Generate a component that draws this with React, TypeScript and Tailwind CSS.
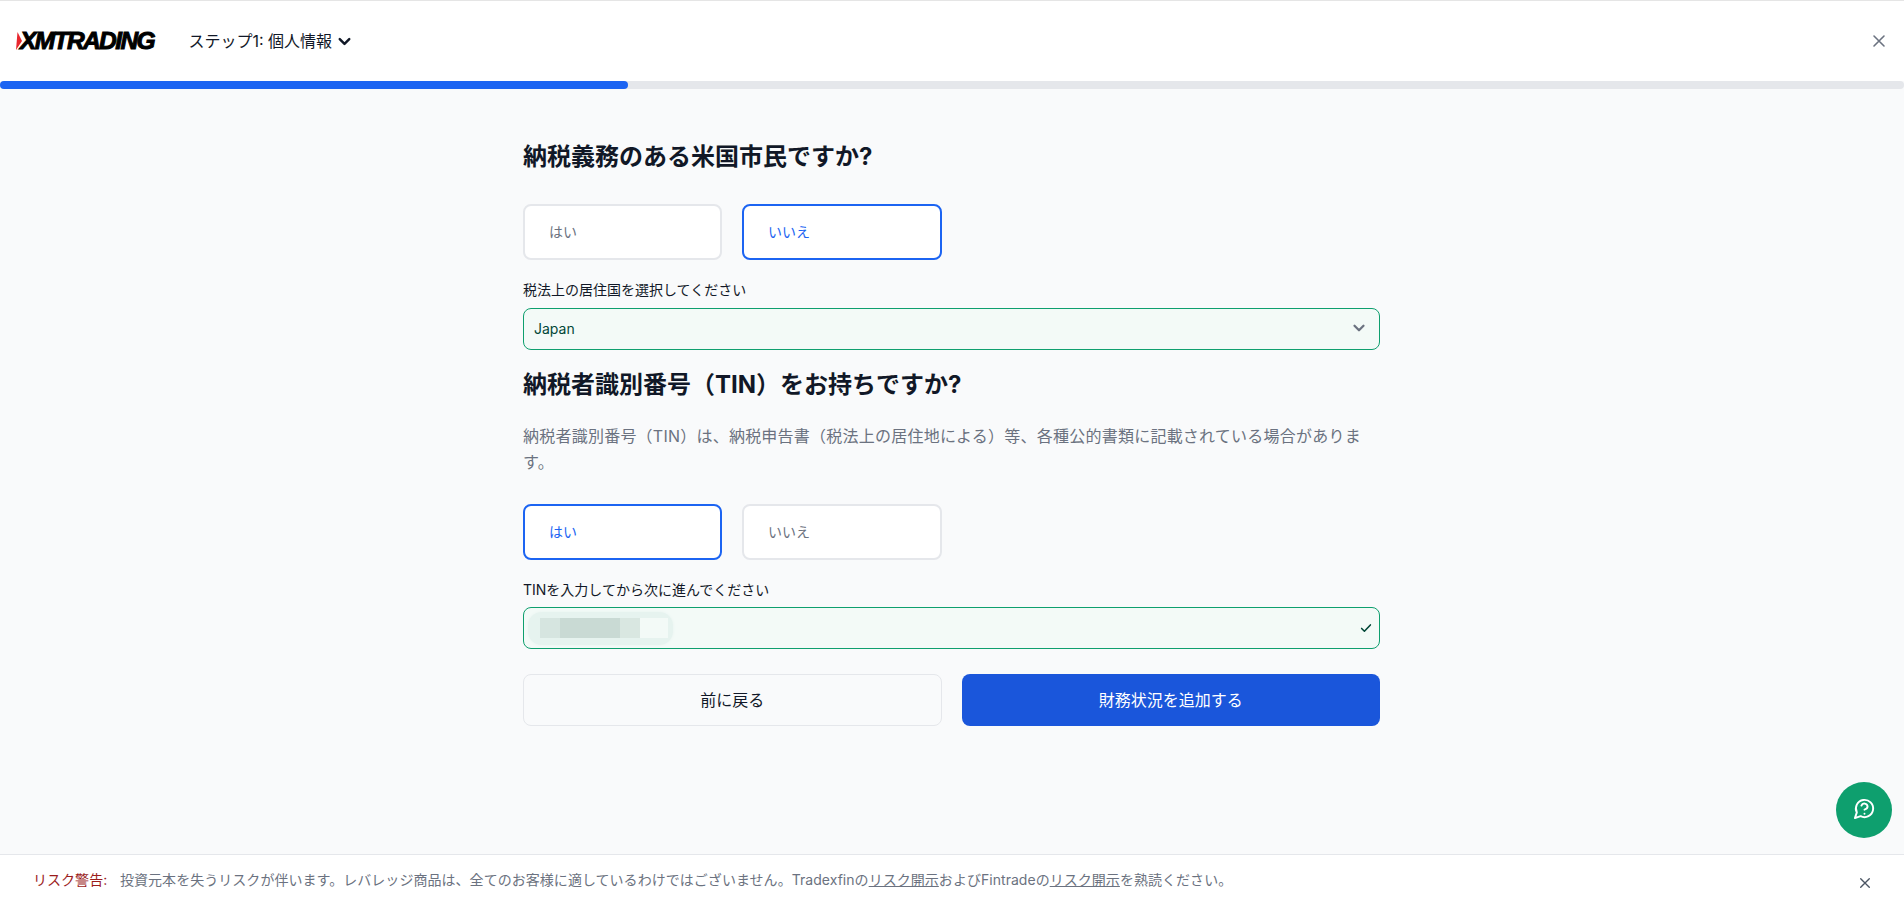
import React from "react";

const Chevron = ({ className, width = 2 }: { className: string; width?: number }) => (
  <svg viewBox="0 0 20 20" fill="none" stroke="currentColor" strokeWidth={width} strokeLinecap="round" strokeLinejoin="round" className={className}>
    <path d="M5 7.5l5 5 5-5" />
  </svg>
);

const Close = ({ className }: { className: string }) => (
  <svg viewBox="0 0 14 14" fill="none" stroke="currentColor" strokeWidth="1.6" strokeLinecap="round" className={className}>
    <path d="M2 2l10 10M12 2L2 12" />
  </svg>
);

const Choice = ({ label, active }: { label: string; active?: boolean }) => (
  <button
    className={
      "h-[56px] rounded-lg border-2 bg-white pb-[2px] pl-[24px] text-left text-[14px] " +
      (active ? "border-[#1c64f2] text-[#1c64f2]" : "border-[#e5e7eb] text-[#6b7280]")
    }
  >
    {label}
  </button>
);

export default function App() {
  return (
    <div className="relative flex h-screen flex-col overflow-hidden bg-[#f9fafb] font-['Inter','Noto_Sans_CJK_JP',sans-serif] text-[#111827]">
      <header className="flex h-[81px] shrink-0 items-center border-t border-[#e5e5e5] bg-white pl-[16px] pr-[18px]">
        <div className="flex w-[172.5px] items-center">
          <svg viewBox="0 0 6 18" className="mr-[-2px] h-[18px] w-[6px] shrink-0">
            <polygon points="1.5,0 6,9 0,18" fill="#e8262d" />
          </svg>
          <span className="font-['Liberation_Sans',sans-serif] text-[24.5px] font-bold italic leading-none tracking-[-1.6px] text-black [-webkit-text-stroke:1px_black]">
            XMTRADING
          </span>
        </div>
        <div className="flex items-center text-[16px] text-[#111827]">
          <span>ステップ1: 個人情報</span>
          <Chevron width={2.6} className="ml-[3px] h-[19px] w-[19px]" />
        </div>
        <Close className="ml-auto h-[14px] w-[14px] text-[#6b7280]" />
      </header>

      <div className="h-2 shrink-0 rounded-full bg-[#e5e7eb]">
        <div className="h-2 w-[628px] rounded-full bg-[#1c64f2]" />
      </div>

      <main className="flex-1">
        <div className="ml-[523px] w-[857px] pt-[52px]">
          <h2 className="text-[24px] font-bold leading-[32px]">納税義務のある米国市民ですか?</h2>
          <div className="mt-[31px] grid grid-cols-[199px_200px] gap-5">
            <Choice label="はい" />
            <Choice label="いいえ" active />
          </div>
          <label className="mt-5 block text-[14px] leading-5">税法上の居住国を選択してください</label>
          <div className="mt-2 flex h-[42px] items-center justify-between rounded-lg border border-[#0e9f6e] bg-[#f3faf7] pb-[2px] pl-[10px] pr-[11px] text-[14px] text-[#014737]">
            <span>Japan</span>
            <Chevron width={2.5} className="h-[18px] w-[18px] text-[#6b7280]" />
          </div>

          <h2 className="mt-[19px] text-[24px] font-bold leading-[32px]">納税者識別番号（TIN）をお持ちですか?</h2>
          <p className="mt-[22px] text-[16px] leading-[26px] tracking-[0.23px] text-[#6b7280]">
            納税者識別番号（TIN）は、納税申告書（税法上の居住地による）等、各種公的書類に記載されている場合があります。
          </p>
          <div className="mt-[29px] grid grid-cols-[199px_200px] gap-5">
            <Choice label="はい" active />
            <Choice label="いいえ" />
          </div>
          <label className="mt-5 block text-[14px] leading-5">TINを入力してから次に進んでください</label>
          <div className="mt-[7px] flex h-[42px] items-center justify-between rounded-lg border border-[#0e9f6e] bg-[#f3faf7] pl-[4px] pr-[6px]">
            <div className="flex h-[33px] w-[145px] items-center rounded-[14px] bg-[#e6f3ef] pl-[12px] shadow-[0_0_3px_#e6f3ef]">
              <div className="h-5 w-5 bg-[#d6e5e0]" />
              <div className="h-5 w-[60px] bg-[#c9dad4]" />
              <div className="h-5 w-5 bg-[#d9e7e1]" />
              <div className="h-5 w-[28px] bg-[#f3faf7]" />
            </div>
            <svg viewBox="0 0 16 16" fill="none" stroke="#014737" strokeWidth="1.8" strokeLinecap="round" strokeLinejoin="round" className="h-[14px] w-[14px]">
              <path d="M3 8.5l3.2 3.2L13 4.5" />
            </svg>
          </div>
          <div className="mt-[25px] grid grid-cols-2 gap-5">
            <button className="h-[52px] rounded-lg border border-[#e5e7eb] text-[16px] text-[#111827]">前に戻る</button>
            <button className="h-[52px] rounded-lg bg-[#1a56db] text-[16px] text-white">財務状況を追加する</button>
          </div>
        </div>
      </main>

      <button className="absolute right-[12px] top-[782px] flex h-[56px] w-[56px] items-center justify-center rounded-full bg-[#0e9f6e] pb-[3px] text-white">
        <svg viewBox="0 0 24 24" fill="none" stroke="currentColor" strokeWidth="2" strokeLinecap="round" strokeLinejoin="round" className="h-[23px] w-[23px]">
          <path d="M7.9 20A9 9 0 1 0 4 16.1L2 22Z" />
          <path d="M8.8 9a3.3 3.3 0 0 1 6.4 1c0 2.2-3.2 3.2-3.2 3.2" />
          <path d="M12 17.4h.01" />
        </svg>
      </button>

      <footer className="flex h-[57px] shrink-0 items-center border-t border-[#e5e7eb] bg-white pl-[33px] pr-[33px] text-[14px] tracking-[0.04px] text-[#6b7280]">
        <span className="mb-[8px] w-[87px] shrink-0 text-[#9b1c1c]">リスク警告:</span>
        <span className="mb-[8px]">
          投資元本を失うリスクが伴います。レバレッジ商品は、全てのお客様に適しているわけではございません。Tradexfinの
          <span className="underline">リスク開示</span>およびFintradeの<span className="underline">リスク開示</span>を熟読ください。
        </span>
        <Close className="ml-auto h-3 w-3 text-[#4b5563]" />
      </footer>
    </div>
  );
}
